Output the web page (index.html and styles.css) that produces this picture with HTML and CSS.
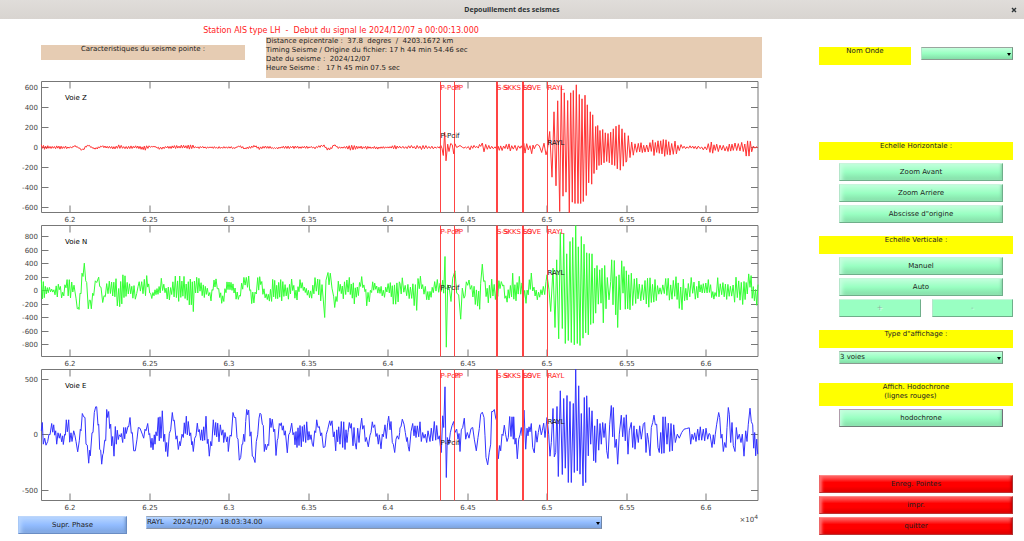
FILE: index.html
```html
<!DOCTYPE html>
<html lang="fr">
<head>
<meta charset="utf-8">
<title>Depouillement des seismes</title>
<link rel="stylesheet" href="styles.css">
</head>
<body>
<header class="titlebar">
  <h1 class="titlebar-text">Depouillement des seismes</h1>
  <button class="close" type="button" aria-label="Fermer"><svg viewBox="0 0 6 6" class="close-icon"><path d="M1 1L5 5M5 1L1 5"/></svg></button>
</header>
<main class="layout">
  <section class="work">
    <p class="station">Station AIS type LH  -  Debut du signal le 2024/12/07 a 00:00:13.000</p>
    <div class="info-row">
      <p class="info caption">Caracteristiques du seisme pointe :</p>
      <p class="info details">Distance epicentrale :  37.8  degres  /  4203.1672 km
Timing Seisme / Origine du fichier: 17 h 44 min 54.46 sec
Date du seisme :  2024/12/07
Heure Seisme :   17 h 45 min 07.5 sec</p>
    </div>
    <svg class="plots" id="plots" viewBox="0 0 770 435" role="img" aria-label="Voies Z, N et E"></svg>
    <div class="footer-row">
      <button class="btn blue supr" type="button">Supr. Phase</button>
      <span class="drop blue phase"><select aria-label="Phase"><option>RAYL&nbsp;&nbsp;&nbsp; 2024/12/07&nbsp;&nbsp; 18:03:34.00</option></select></span>
      <span class="exponent">×10<sup>4</sup></span>
    </div>
  </section>
  <aside class="panel">
    <div class="onde">
      <label class="head" for="onde">Nom Onde</label>
      <span class="drop green"><select id="onde"><option></option></select></span>
    </div>
    <section class="group horiz">
      <h2 class="head">Echelle Horizontale :</h2>
      <button class="btn green inset" type="button">Zoom Avant</button>
      <button class="btn green inset" type="button">Zoom Arriere</button>
      <button class="btn green inset" type="button">Abscisse d"origine</button>
    </section>
    <section class="group vert">
      <h2 class="head">Echelle Verticale :</h2>
      <button class="btn green inset" type="button">Manuel</button>
      <button class="btn green inset" type="button">Auto</button>
      <div class="pair">
        <button class="btn green" type="button" disabled>+</button>
        <button class="btn green" type="button" disabled>-</button>
      </div>
    </section>
    <section class="group type">
      <label class="head" for="type">Type d"affichage :</label>
      <span class="drop green inset"><select id="type"><option>3 voies</option></select></span>
    </section>
    <section class="group hodo">
      <h2 class="head tall">Affich. Hodochrone
(lignes rouges)     </h2>
      <button class="btn green inset framed" type="button">hodochrone</button>
    </section>
    <div class="group actions">
      <button class="btn red" type="button">Enreg. Pointes</button>
      <button class="btn red" type="button">impr.</button>
      <button class="btn red" type="button">quitter</button>
    </div>
  </aside>
</main>
<script src="plots.js"></script>
</body>
</html>
```
FILE: styles.css
```css
* { box-sizing: border-box; }

body {
  margin: 0;
  min-height: 100vh;
  background: #fff;
  color: #222;
  font: 7px/9px "DejaVu Sans", sans-serif;
}

h1, h2, p { margin: 0; font: inherit; }

button, select { font: inherit; color: inherit; margin: 0; }

.titlebar {
  display: grid;
  grid-template-columns: 20px 1fr 20px;
  align-items: center;
  height: 19px;
  background: linear-gradient(#e0ddda, #d8d4d0);
}

.titlebar-text {
  grid-column: 2;
  text-align: center;
  color: #2e3436;
  font: bold 7px/9px "Noto Sans", sans-serif;
}

.close {
  display: grid;
  place-items: center;
  border: 0;
  padding: 0;
  background: none;
}

.close-icon { width: 6px; height: 6px; stroke: #2e3436; stroke-width: 1.4; }

.layout {
  display: grid;
  grid-template-columns: minmax(0, 1fr) 194px;
  gap: 49px;
  padding-right: 11px;
}

.station {
  padding-top: 7px;
  height: 18px;
  line-height: 10px;
  font-size: 8px;
  color: #f22;
  text-align: center;
  padding-right: 88px;
  white-space: pre;
}

.info-row {
  display: grid;
  grid-template-columns: 204px 1fr;
  gap: 21px;
  align-items: start;
  padding: 0 8px 0 41px;
  margin-bottom: 3px;
}

.info { background: #e6ccb3; white-space: pre; }

.caption { height: 15px; margin-top: 8px; text-align: center; }

.details { height: 41px; }

.plots { display: block; width: 100%; }

.footer-row {
  display: flex;
  align-items: flex-start;
  padding: 0 12px 0 18px;
}

.supr { width: 109px; margin-right: 19px; }

.phase { flex: 0 1 456px; }

.exponent { margin-left: auto; color: #444; line-height: 8px; }

.exponent sup { font-size: 6px; line-height: 0; vertical-align: 3px; }

.panel { padding-top: 28px; }

.onde {
  display: grid;
  grid-template-columns: 1fr 92px;
  gap: 10px;
  align-items: start;
}

.head {
  display: block;
  height: 18px;
  background: #ff0;
  text-align: center;
  white-space: pre;
}

.tall { height: 23px; }

.group { display: grid; gap: 3px; }

.inset { margin: 0 10px 0 20px; }

.horiz { margin-top: 77px; }
.vert { margin-top: 13px; }
.type { margin-top: 13px; }
.hodo { margin-top: 19px; }
.actions { margin-top: 48px; }

.pair { display: grid; grid-template-columns: 1fr 1fr; gap: 11px; padding-left: 20px; }

.btn {
  height: 18px;
  border: 1px solid;
  padding: 0;
  text-align: center;
}

.green {
  border-color: #c8f5dc #6fae8a #6fae8a #b4e6ca;
  background: linear-gradient(#c2ffdc, #99ffc2 50%, #84dda8);
}

.btn.green { box-shadow: inset 4px 0 4px -2px #c8ffe0, inset -3px 0 3px -2px #84cfa4; }

.btn.green:disabled { background: #99ffc2; color: #8bb59c; box-shadow: none; text-shadow: 1px 1px #d8ffe8; }

.btn.framed { border-color: #b09bab #6f6f78 #6f7f78 #b09bab; }

.blue {
  border-color: #bcd6fb #6a8dc4 #6a8dc4 #a8c8f6;
  background: linear-gradient(#b8d6ff, #92bcff 50%, #7da4de);
}

.btn.blue { box-shadow: inset 4px 0 4px -2px #b8d6ff, inset -3px 0 3px -2px #7396cc; }

.red {
  border-color: #f88 #a33 #b33 #e66;
  background: linear-gradient(#ff6a6a, #f00 40%, #f00 65%, #dc0000);
  box-shadow: inset 4px 0 3px -2px #ff7070, inset -3px 0 3px -2px #b00;
}

.drop {
  display: block;
  position: relative;
  height: 13px;
  border: 1px solid;
}

.drop.green { border-color: #9aa59e #6f9a80 #8a9a90 #b4e6ca; }
.drop.blue { border-color: #9aa5b4 #6f86a8 #8a95a8 #a8c8f6; }

.drop select {
  display: block;
  width: 100%;
  height: 11px;
  border: 0;
  padding: 0;
  background: none;
  appearance: none;
  white-space: pre;
}

.drop::after {
  content: "";
  position: absolute;
  right: 1px;
  top: 5px;
  border: 2px solid transparent;
  border-top: 3px solid #000;
  border-bottom: 0;
  pointer-events: none;
}

.plots text { font-size: 7px; fill: #444; }
.plots .end { text-anchor: end; }
.plots .mid { text-anchor: middle; }
.plots .name { fill: #000; }
.plots .pick { fill: #f22; }
.plots .mark { fill: #111; }
.axis { fill: none; stroke: #777; stroke-width: 1; }
.phase-line { stroke: #f44; stroke-width: 1; }
.phase-line.bold { stroke-width: 2; }
.trace { fill: none; stroke-width: 1; stroke-linejoin: round; }
```
FILE: plots.js
```js
// Samples are in thirds of a pixel. A group of two numbers is a sample (x y);
// a group of three is a band (x top bottom) filled with an oscillation.
const channels = [
  { name: 'Voie Z', top: 1, color: '#f33', zero: 216, period: 8.7, fine: 7,
    ticks: [['600', 6], ['400', 26], ['200', 46], ['0', 66], ['-200', 86], ['-400', 106], ['-600', 126]],
    marks: [56, 63],
    left: '124 208 223,140 209 222,160 211 220,180 209 221,200 212 221,215 212 219,225 209 214,235 213 218,240 218 222,248 219 228,256 210 218,265 207 212,272 212 216,282 216 222,295 213 220,305 209 216,325 212 219,345 210 222,356 205 221,375 211 221,400 210 220,420 212 221,436 208 225,455 212 215,465 212 215,478 216 222,500 210 219,530 210 221,575 207 222,590 213 219,630 212 219,650 213 220,690 212 219,705 215 221,718 208 214,735 215 224,745 213 220,765 207 216,778 214 222,800 210 219,820 215 221,850 212 219,900 211 220,930 212 219,945 214 220,960 209 216,972 207 214,982 216 224,992 216 224,1002 206 210,1015 213 221,1040 211 220,1055 205 230,1063 206 226,1080 210 222,1110 212 221,1140 212 221,1170 212 218,1188 206 222,1199 211 220',
    right: '0 213 220,30 210 219,60 209 223,100 212 221,118 213 219,126 196 225,130 240,134 170,138 256,143 206,147 228,152 204,157 208,161 235,165 205,170 216,180 210,188 215 219,200 214 218,210 208 224,222 209 217,235 212 220,242 200 218,252 204 236,262 202 228,275 212 222,290 212 224,302 203 235,315 206 224,335 203 228,345 209 227,360 210 222,368 200 230,375 202 235,385 207 226,395 205 236,403 208 222,412 207,418 211,425 231,432 203,438 238,442 225,449 168,456 305,462 109,468 331,473 76,479 408,484 33,489 362,493 52,498 350,503 75,508 412,512 52,517 380,520 45,525 384,529 28,534 384,538 57,542 384,546 70,550 378,555 59,559 360,562 88,566 322,571 109,575 326,578 118,582 294,587 153,590 283,593 150,597 270,600 165,604 268,608 162,612 262,616 172,620 258,624 174,628 262,632 170,636 268,640 160,644 270,648 152,652 280,657 148,661 284,666 160,670 272,674 172,678 260,680 172 258,690 187 248,700 188 248,715 197 238,735 195 241,750 192 240,770 188 242,790 190 244,810 194 242,825 196 236,838 203 234,848 211 221,870 211 221,890 211 221,905 212 222,920 208 228,930 195 237,950 198 235,965 201 232,980 203 235,1000 203 233,1015 196 236,1030 193 240,1047 192 245,1055 202 235,1065 210 220,1073 213 218' },
  { name: 'Voie N', top: 145, color: '#3f3', zero: 207, period: 8, fine: 6.6,
    ticks: [['800', 11], ['600', 25], ['400', 38], ['200', 52], ['0', 65], ['-200', 79], ['-400', 92], ['-600', 106], ['-800', 119]],
    marks: [64, 49],
    left: '124 158 225,130 165 250,136 190 225,145 192 218,155 202 211,165 200 222,172 180 238,178 180 215,188 205 242,198 172 205,208 172 238,215 168 235,222 185 215,228 230,232 262,236 258,237 264,240 215,243 217,246 155,249 165,253 125,257 178,260 183,265 262,268 236,271 236,274 262,278 215,281 222,286 178,290 183,296 167,299 195,303 197,308 243,312 220 243,320 185 215,328 178 222,338 175 225,348 160 240,356 175 272,362 172 255,372 145 242,378 170 238,392 174 225,402 190 252,410 212 230,414 172 205,425 175 234,433 173 239,440 157 210,446 180 205,452 212 235,462 208 228,474 190 225,484 170 215,495 188 220,505 196 255,515 168 238,526 158 242,536 165 252,552 155 255,565 163 252,580 168 272,590 150 215,600 173 218,610 186 232,622 195 220,633 215 242,642 163 205,648 162 200,656 195 225,668 220 253,678 178 215,690 180 207,702 185 222,718 213 250,728 170 205,746 156 200,755 215 257,765 205 240,773 167 215,782 156 200,792 200 240,805 212 240,818 165 244,830 168 242,845 173 242,862 190 240,878 168 215,888 203 247,900 173 205,910 188 215,922 196 228,935 203 235,945 167 210,953 165 210,962 172 247,970 178 240,974 288,978 176,984 153,987 190,991 155,996 200,1001 226,1004 258,1008 225,1011 240,1015 176 215,1030 180 235,1048 160 220,1060 172 264,1072 180 235,1085 155 200,1095 200 215,1100 203 262,1108 208 252,1118 175 205,1130 190 210,1150 197 240,1168 166 215,1180 183 250,1198 173 250',
    right: '0 180 225,7 163 210,20 188 235,35 187 242,50 176 268,58 152 215,68 178 218,80 200 240,90 205 238,100 188 215,112 165 210,120 185 235,128 175 210,131 215,135 105,139 377,143 190,148 200,153 240,158 170,165 148,170 215,176 220,182 293,187 200,192 230,195 183 225,203 160 200,215 182 215,226 195 252,236 205 264,242 185,247 128,251 180,255 175 228,265 186 247,275 170 242,290 174 256,300 176 205,308 178 195,318 212 255,328 182 247,338 155 235,348 167 257,358 155 230,370 188 245,378 225 250,388 167 215,394 152 205,402 195 225,412 210 235,430 185 230,438 180,441 160,447 205,452 270,459 140,465 318,470 115,476 352,481 33,487 321,491 36,496 366,500 97,505 357,510 60,514 363,518 48,523 370,527 12,532 366,535 76,540 372,544 45,549 350,552 68,557 334,560 94,565 340,568 96,572 309,576 97,580 305,584 140,587 275,591 132,595 248,599 145,603 245,606 140,610 304,614 132,618 262,622 168,627 235,632 180,635 115,639 250,643 117,647 280,649 165,653 318,657 160,661 265,665 118,669 215,672 135,676 263,679 148,683 262,686 160,690 265,694 155,698 252,703 172,707 246,710 170,714 232,718 165 250,735 168 242,750 168 266,765 174 240,780 186 232,797 158 232,812 180 248,828 147 238,838 168 272,850 172 262,865 186 232,878 158 225,890 185 258,900 174 225,910 183 217,925 170 215,935 198 235,945 205 232,953 155 225,965 178 230,980 182 244,995 174 246,1008 160 242,1020 168 239,1032 168 264,1042 160 225,1050 150 200,1060 174 247,1070 195 272,1074 188 250' },
  { name: 'Voie E', top: 289, color: '#33f', zero: 211, period: 8, fine: 6,
    ticks: [['500', 10], ['0', 65], ['-500', 121]],
    marks: [75, 54],
    left: '124 200,127 175,130 240,134 222,138 243,143 232,147 210,150 212,155 178,158 204,161 182,164 213,167 200,170 240,174 206,178 222,181 208,185 233,188 215,190 241,194 210,196 213,199 167,202 203,206 167,209 234,213 206,216 232,221 200,225 215,228 232,233 263,238 230,241 195,243 200,247 148,251 158,255 160,258 240,262 243,266 297,269 258,271 275,276 206,279 205,283 145,287 128,290 128,294 183,296 180,299 256,302 258,305 300,308 272,310 268,314 228,317 230,320 136,323 160,326 142,329 193,332 180,335 245,338 217,342 276,346 187,349 240,352 198,355 226,358 212,362 218,364 208,368 235,371 190,374 224,377 190,379 208,384 186,386 188,390 160,394 207,397 205,401 260,406 260,411 225,415 190,420 192,427 210,431 222,435 195,438 200,443 178,447 212,449 208,453 250,456 222,459 257,463 212,465 240,468 203,471 215,475 160,478 230,480 158,483 222,487 140,491 232,494 210,497 262,500 235,503 277,508 208,512 197,517 145,520 170,523 168,528 225,531 215,535 256,539 232,541 245,546 210,550 220,553 176,556 208,559 156,562 212,565 172,569 215,572 206,575 242,577 232,580 262,584 222,588 215,592 177,595 203,598 196,602 228,605 197,608 230,611 188,614 228,618 156,622 238,624 225,628 276,632 232,635 245,640 167,644 213,647 175,650 218,653 177,657 233,661 182,665 213,669 197,671 235,675 205,680 233,683 218,685 262,690 213,694 216,699 145,703 160,707 160,711 220,714 225,718 288,722 280,726 240,728 240,731 210,734 232,737 172,740 136,743 152,746 138,750 216,753 203,757 276,760 278,765 295,769 232,773 212,777 162,780 147,783 150,787 180,790 184,793 262,796 240,799 257,803 240,806 244,810 162,813 190,817 165,821 203,824 195,828 274,832 228,834 222,838 178,841 184,844 176,847 198,850 185,853 213,856 200,862 266,866 212,870 205,875 177,879 212,882 205,885 242,888 202,891 250,894 191,897 244,900 184,904 248,907 187,910 232,913 182,917 235,920 173,924 228,927 202,930 226,933 212,937 240,940 247,944 200,947 205,950 167,954 190,958 187,962 215,965 206,970 250,975 248,979 210,983 196,989 170,992 184,996 170,1000 218,1003 203,1007 260,1010 197,1013 233,1016 188,1020 240,1024 172,1028 250,1031 173,1035 256,1038 197,1041 235,1044 205,1048 175,1051 192,1054 178,1059 245,1062 190,1065 234,1069 255,1073 192,1077 235,1080 200,1085 162,1088 195,1092 184,1096 232,1099 220,1105 248,1110 213,1113 205,1117 173,1120 190,1124 182,1128 217,1131 208,1135 240,1138 212,1143 254,1147 210,1150 218,1155 182,1159 223,1163 175,1166 156,1170 197,1173 172,1177 235,1180 240,1184 265,1188 225,1192 215,1196 225,1199 205',
    right: '0 190,3 188,7 165,12 180,16 205,20 232,22 220,25 248,28 261,33 203,38 178,42 215,45 185,48 220,52 185,56 218,60 173,64 232,68 205,72 222,76 210,80 235,84 200,90 232,94 192,98 230,103 172,107 228,110 184,114 225,118 215,121 244,124 265,128 155,131 190,135 68,139 340,142 220,147 240,151 206,156 185,161 172,165 205,170 195,174 225,177 208,180 262,184 197,188 190,193 162,197 225,202 205,207 222,213 193,218 190,223 225,229 260,234 220,238 193,242 150,247 144,252 160,255 215,258 280,263 302,268 264,272 240,275 142,279 142,283 136,287 162,290 170,292 230,295 284,299 244,302 260,306 210,309 214,313 183,317 212,321 232,325 220,329 157,333 217,336 158,340 225,341 158,345 240,348 222,352 284,356 225,360 212,364 190,367 215,372 138,377 255,381 192,384 215,387 188,390 203,394 178,398 250,403 266,407 200,411 234,415 205,419 182,424 212,427 200,431 177,435 220,441 160,446 210,450 276,454 235,459 133,463 278,467 265,471 127,475 337,481 80,487 331,491 103,496 312,501 94,505 355,510 112,514 355,520 118,523 325,527 15,532 320,536 65,540 330,544 148,549 365,553 100,557 355,560 95,565 275,568 130,572 240,576 140,581 290,584 185,587 295,592 165,596 258,600 178,604 240,608 175,612 220,616 178,620 260,624 283,629 180,634 124,638 218,640 130,645 250,649 225,653 300,658 210,664 153,668 218,672 160,676 230,679 152,684 270,688 200,694 175,698 250,702 185,705 255,710 195,715 235,719 185,724 225,730 180,734 175,738 265,742 207,745 225,750 275,754 190,758 175,762 153,766 182,770 180,774 250,778 265,782 205,785 268,789 158,792 267,796 158,801 240,805 177,809 262,813 178,817 260,821 182,826 235,832 210,838 222,845 205,852 195,860 193,868 191,872 240,876 210,880 226,884 206,888 232,893 195,897 228,901 188,905 228,910 195,914 230,918 192,923 225,927 208,930 210,936 250,940 212,943 240,946 210,950 180,956 145,959 160,963 222,966 210,970 262,974 235,978 250,981 190,985 130,988 150,992 235,996 175,1000 245,1005 262,1009 190,1013 225,1018 210,1023 235,1027 210,1032 276,1037 200,1041 232,1045 180,1050 132,1054 172,1058 182,1061 252,1064 205,1067 275,1070 225,1073 270' }
];

const phases = [
  { x: 440.5, label: 'P-Pcif' },
  { x: 454.5, label: 'PP' },
  { x: 497, label: 'S-S', bold: true },
  { x: 503, label: 'SKKS', labelOnly: true },
  { x: 523, label: 'SS', bold: true },
  { x: 523, label: 'LOVE', labelOnly: true },
  { x: 547.5, label: 'RAYL' }
];
const xTicks = ['6.2', '6.25', '6.3', '6.35', '6.4', '6.45', '6.5', '6.55', '6.6'];

let seed = 7;
const random = () => (seed = (seed * 16807) % 2147483647) / 2147483647;

function samples(text, shift, period) {
  const keys = text.split(',').map(g => g.split(' ').map(Number));
  const out = [];
  let up = true;
  keys.forEach((key, i) => {
    const [x, a, b] = key;
    const next = keys[i + 1];
    if (b === undefined) { out.push([x + shift, a]); return; }
    const end = next ? next[0] : x;
    const c = next && next.length === 3 ? next : key;
    const steps = Math.max(1, Math.round((end - x) / (period / 2)));
    for (let k = 0; k < steps; k++) {
      const t = k / steps;
      const hi = a + (c[1] - a) * t;
      const lo = b + (c[2] - b) * t;
      const trim = (lo - hi) * random() * 0.32;
      out.push([x + shift + (end - x) * t, up ? hi + trim : lo - trim]);
      up = !up;
    }
  });
  return out;
}

const text = (x, y, cls, s) => `<text x="${x}" y="${y}" class="${cls}">${s}</text>`;
const X0 = 41.5, X1 = 758, H = 131;

document.getElementById('plots').innerHTML = channels.map(c => {
  const y0 = c.top - 0.5, y1 = y0 + H;
  const zeroY = c.top + c.ticks.find(t => t[0] === '0')[1] - 0.5;
  let axis = `M${X0} ${y0}H${X1}V${y1}H${X0}Z`;
  let labels = '';
  xTicks.forEach((label, i) => {
    const x = Math.round(70 + i * 79.56);
    axis += `M${x} ${y0}v7M${x} ${y1}v-7`;
    labels += text(x, y1 + 9, 'mid', label);
  });
  c.ticks.forEach(([label, dy]) => {
    const y = c.top + dy - 0.5;
    axis += `M${X0} ${y}h7M${X1} ${y}h-7`;
    labels += text(38, y + 2, 'end', label);
  });
  const pts = samples(c.left, 0, c.fine).concat(samples(c.right, 1200, c.period))
    .map(([x, y]) => `${(x / 3).toFixed(1)},${(zeroY + (y - c.zero) / 3).toFixed(1)}`).join(' ');
  let lines = '';
  phases.forEach(p => {
    if (!p.labelOnly) lines += `<path class="phase-line${p.bold ? ' bold' : ''}" d="M${p.x} ${y0}V${y1}"/>`;
    lines += text(p.x, c.top + 8, 'pick', p.label);
  });
  return `<path class="axis" d="${axis}"/><polyline class="trace" stroke="${c.color}" points="${pts}"/>`
    + labels + lines + text(65, c.top + 18, 'name', c.name)
    + text(440.5, c.top + c.marks[0], 'mark', 'P-Pcif') + text(547.5, c.top + c.marks[1], 'mark', 'RAYL');
}).join('');
```
